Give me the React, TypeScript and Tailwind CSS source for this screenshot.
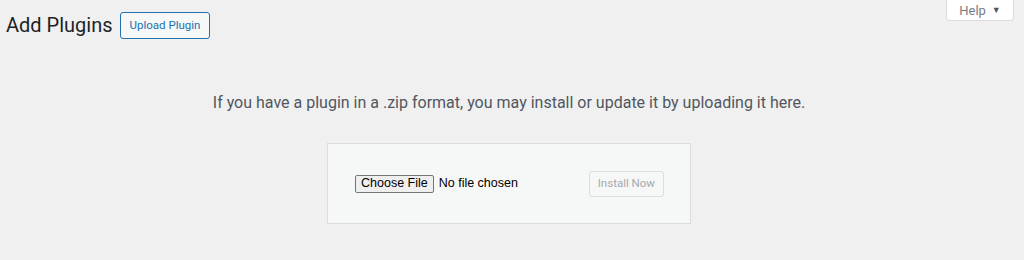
export default function App() {
  return (
    <div className="min-h-[260px] bg-[#f0f0f1] font-['Roboto',sans-serif] text-[#1d2327]">
      <div className="flex justify-end pr-[10px]">
        <button className="flex h-[21px] w-[68px] items-center justify-center gap-[6px] rounded-b-[4px] border border-t-0 border-[#dcdcde] bg-white text-[13px] text-[#787c82]">
          <span className="leading-none">Help</span>
          <span className="text-[9px] leading-none text-[#50575e]">▼</span>
        </button>
      </div>

      <div className="pl-[6px] pr-[12px]">
        <div className="-mt-[9px] flex items-center gap-[7px]">
          <h1 className="text-[20px] leading-[27px] font-normal">Add Plugins</h1>
          <button className="h-[27px] rounded-[3px] border border-[#2271b1] bg-[#f6f7f7] px-[9px] text-[11.5px] text-[#2271b1]">
            Upload Plugin
          </button>
        </div>

        <p className="mt-[53px] text-center text-[16px] leading-[21px] text-[#50575e]">
          If you have a plugin in a .zip format, you may install or update it by uploading it here.
        </p>

        <div className="mt-[30px] flex justify-center">
          <div className="flex h-[81px] w-[364px] items-center justify-between border border-[#dcdcde] bg-[#f6f7f7] pl-[27px] pr-[26px]">
            <div className="flex items-center gap-[5px] font-['Liberation_Sans',sans-serif] text-[12.5px] text-black">
              <span className="flex h-[18px] items-center rounded-[2px] border border-[#767676] bg-[#efefef] px-[5px]">
                Choose File
              </span>
              <span>No file chosen</span>
            </div>
            <button
              disabled
              className="h-[26px] rounded-[3px] border border-[#dcdcde] bg-[#f6f7f7] px-[8px] text-[11.5px] text-[#a7aaad]"
            >
              Install Now
            </button>
          </div>
        </div>
      </div>
    </div>
  )
}
